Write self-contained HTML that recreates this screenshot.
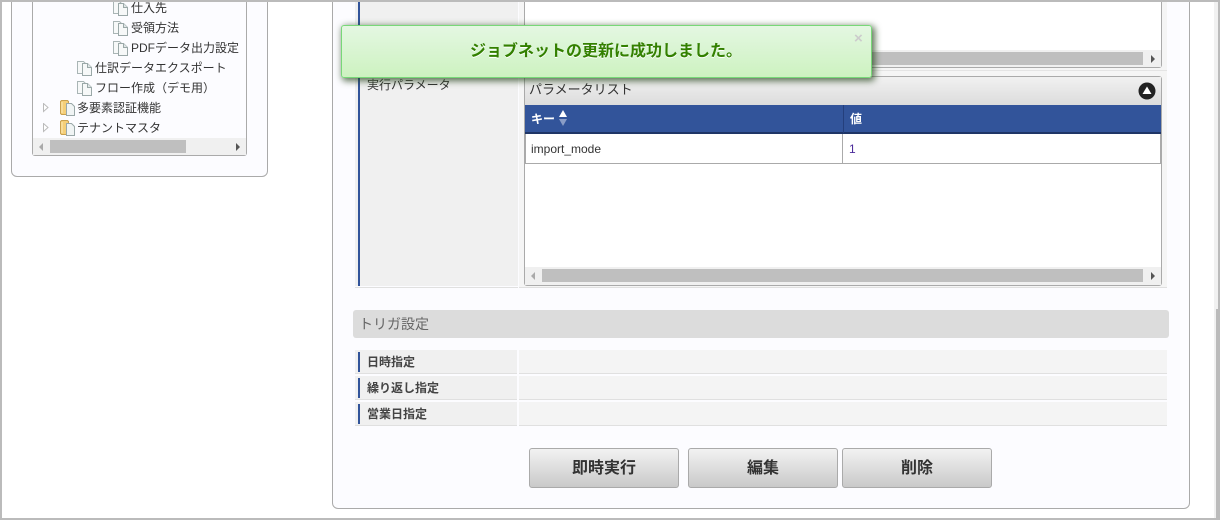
<!DOCTYPE html>
<html lang="ja"><head><meta charset="utf-8"><style>
html,body{margin:0;padding:0;background:#fff}
body{width:1220px;height:520px;position:relative;overflow:hidden;font-family:"Liberation Sans","Noto Sans CJK JP",sans-serif;color:#333;font-size:12px}
.a{position:absolute;box-sizing:border-box}
.t{position:absolute;white-space:nowrap;line-height:16px}
svg{position:absolute;display:block}
.btn{position:absolute;top:448px;width:150px;height:40px;box-sizing:border-box;border:1px solid #aaa;border-radius:3px;background:linear-gradient(#f2f2f2,#c9c9c9);text-align:center;font-weight:bold;font-size:16px;line-height:40px;color:#333}
</style></head><body>
<svg width="0" height="0"><defs>
<symbol id="doc" viewBox="0 0 15 15"><path d="M.5 .5h6l2 2v10h-8z" fill="#f6f8f8" stroke="#a9b5b5"/><path d="M5.500 2.500h5l4 4v8h-9z" fill="#f6f8f8" stroke="#9aa8a8"/><path d="M10.500 2.500v4h4" fill="#dfe6e6" stroke="#9aa8a8"/></symbol>
<symbol id="fold" viewBox="0 0 15 16"><path d="M.5 1.500l1-1h6l1 1v13h-7l-1-1z" fill="#f5cf78" stroke="#c9a14f"/><path d="M2 2v11" stroke="#fbeab9"/><path d="M6.500 3.500h5l3 3v9h-8z" fill="#f0f4f4" stroke="#9aa8a8"/></symbol>
</defs></svg>

<!-- left panel -->
<div class="a" style="left:11px;top:-10px;width:257px;height:187px;border:1px solid #aaa;border-radius:6px;background:#fcfcff"></div>
<div class="a" style="left:32px;top:-10px;width:215px;height:166px;border:1px solid #aaa;border-top:0;border-radius:3px;background:#fcfcff"></div>
<svg style="left:113px;top:1px" width="15" height="15"><use href="#doc"/></svg>
<svg style="left:113px;top:21px" width="15" height="15"><use href="#doc"/></svg>
<svg style="left:113px;top:41px" width="15" height="15"><use href="#doc"/></svg>
<svg style="left:77px;top:61px" width="15" height="15"><use href="#doc"/></svg>
<svg style="left:77px;top:81px" width="15" height="15"><use href="#doc"/></svg>
<svg style="left:60px;top:100px" width="15" height="16"><use href="#fold"/></svg>
<svg style="left:60px;top:120px" width="15" height="16"><use href="#fold"/></svg>
<svg style="left:43px;top:103px" width="6" height="10"><path d="M.5.5l4.500 4-4.500 4z" fill="#fff" stroke="#bbb"/></svg>
<svg style="left:43px;top:123px" width="6" height="10"><path d="M.5.5l4.500 4-4.500 4z" fill="#fff" stroke="#bbb"/></svg>
<div class="t" style="left:131px;top:0">仕入先</div>
<div class="t" style="left:131px;top:20px">受領方法</div>
<div class="t" style="left:131px;top:40px">PDFデータ出力設定</div>
<div class="t" style="left:95px;top:60px">仕訳データエクスポート</div>
<div class="t" style="left:95px;top:80px">フロー作成（デモ用）</div>
<div class="t" style="left:77px;top:100px">多要素認証機能</div>
<div class="t" style="left:77px;top:120px">テナントマスタ</div>
<div class="a" style="left:33px;top:138px;width:213px;height:17px;background:#f0f0f0"></div>
<div class="a" style="left:50px;top:140px;width:136px;height:13px;background:#bfbfbf"></div>
<svg style="left:39px;top:143px" width="5" height="8"><path d="M4 0v8L0 4z" fill="#aaa"/></svg>
<svg style="left:236px;top:143px" width="5" height="8"><path d="M0 0v8l4-4z" fill="#555"/></svg>

<!-- main panel -->
<div class="a" style="left:332px;top:-10px;width:858px;height:519px;border:1px solid #aaa;border-radius:6px;background:#fcfcff"></div>

<!-- row params -->
<div class="a" style="left:355px;top:0;width:163px;height:286px;background:#f0f0f0"></div>
<div class="a" style="left:358px;top:0;width:2px;height:286px;background:#32549a"></div>
<div class="a" style="left:355px;top:287px;width:163px;height:1px;background:#e0e0e0"></div>
<div class="a" style="left:519px;top:0;width:648px;height:288px;background:#f5f5f5;border-bottom:1px solid #e0e0e0"></div>
<div class="t" style="left:367px;top:77px;font-size:12px;color:#333">実行パラメータ</div>

<!-- top box -->
<div class="a" style="left:524px;top:-5px;width:638px;height:73px;background:#fff;border:1px solid #aaa;border-radius:3px"></div>
<div class="a" style="left:525px;top:50px;width:636px;height:17px;background:#f0f0f0"></div>
<div class="a" style="left:542px;top:52px;width:601px;height:13px;background:#bfbfbf"></div>
<svg style="left:1151px;top:55px" width="5" height="8"><path d="M0 0v8l4-4z" fill="#555"/></svg>
<div class="a" style="left:519px;top:70px;width:648px;height:1px;background:#e4e4e4"></div>

<!-- parameter list box -->
<div class="a" style="left:524px;top:76px;width:638px;height:210px;background:#fff;border:1px solid #aaa;border-radius:3px"></div>
<div class="a" style="left:525px;top:77px;width:636px;height:28px;background:linear-gradient(#f1f1f1,#dcdcdc)"></div>
<div class="t" style="left:529px;top:82px;font-size:13px;color:#333">パラメータリスト</div>
<svg style="left:1138px;top:82px" width="18" height="18"><circle cx="9" cy="9" r="8.500" fill="#222"/><path d="M9 4.500l4.500 7.500h-9z" fill="#fff"/></svg>
<div class="a" style="left:525px;top:105px;width:636px;height:29px;background:#32549a;border-bottom:2px solid #1f3566"></div>
<div class="a" style="left:843px;top:105px;width:1px;height:28px;background:#243f7c"></div>
<div class="t" style="left:531px;top:111px;font-weight:bold;color:#fff">キー</div>
<svg style="left:558px;top:110px" width="10" height="16"><path d="M5 0l4 7H1z" fill="#fff"/><path d="M5 16l4-7H1z" fill="#8a9dc6"/></svg>
<div class="t" style="left:850px;top:111px;font-weight:bold;color:#fff">値</div>
<div class="a" style="left:525px;top:134px;width:636px;height:30px;background:#fff;border-bottom:1px solid #aaa;border-right:1px solid #aaa;border-left:1px solid #aaa"></div>
<div class="a" style="left:842px;top:134px;width:1px;height:29px;background:#aaa"></div>
<div class="t" style="left:531px;top:141px;color:#333">import_mode</div>
<div class="t" style="left:849px;top:141px;color:#4b2a9a">1</div>
<div class="a" style="left:525px;top:267px;width:636px;height:18px;background:#f0f0f0"></div>
<div class="a" style="left:542px;top:269px;width:601px;height:13px;background:#bfbfbf"></div>
<svg style="left:531px;top:272px" width="5" height="8"><path d="M4 0v8L0 4z" fill="#aaa"/></svg>
<svg style="left:1151px;top:272px" width="5" height="8"><path d="M0 0v8l4-4z" fill="#555"/></svg>

<!-- trigger -->
<div class="a" style="left:353px;top:310px;width:816px;height:28px;background:#dcdcdc;border-radius:3px"></div>
<div class="t" style="left:359px;top:316px;font-size:14px;color:#666">トリガ設定</div>

<div class="a" style="left:355px;top:350px;width:162px;height:24px;background:#f0f0f0;border-bottom:1px solid #e0e0e0"></div>
<div class="a" style="left:358px;top:352px;width:2px;height:20px;background:#32549a"></div>
<div class="a" style="left:519px;top:350px;width:648px;height:24px;background:#f4f4f4;border-bottom:1px solid #e0e0e0"></div>
<div class="t" style="left:367px;top:354px;font-weight:bold;color:#444">日時指定</div>

<div class="a" style="left:355px;top:376px;width:162px;height:24px;background:#f0f0f0;border-bottom:1px solid #e0e0e0"></div>
<div class="a" style="left:358px;top:378px;width:2px;height:20px;background:#32549a"></div>
<div class="a" style="left:519px;top:376px;width:648px;height:24px;background:#f4f4f4;border-bottom:1px solid #e0e0e0"></div>
<div class="t" style="left:367px;top:380px;font-weight:bold;color:#444">繰り返し指定</div>

<div class="a" style="left:355px;top:402px;width:162px;height:24px;background:#f0f0f0;border-bottom:1px solid #e0e0e0"></div>
<div class="a" style="left:358px;top:404px;width:2px;height:20px;background:#32549a"></div>
<div class="a" style="left:519px;top:402px;width:648px;height:24px;background:#f4f4f4;border-bottom:1px solid #e0e0e0"></div>
<div class="t" style="left:367px;top:406px;font-weight:bold;color:#444">営業日指定</div>

<div class="btn" style="left:529px">即時実行</div>
<div class="btn" style="left:688px">編集</div>
<div class="btn" style="left:842px">削除</div>

<!-- toast -->
<div class="a" style="left:341px;top:25px;width:531px;height:53px;border:1px solid #78d878;border-radius:3px;background:linear-gradient(#e4f7e2,#cdf2c0);box-shadow:2px 2px 7px 1px rgba(40,70,30,.75)"></div>
<div class="t" style="left:470px;top:42px;font-size:16px;line-height:20px;font-weight:bold;color:#338000;text-shadow:0 1px 0 #fff">ジョブネットの更新に成功しました。</div>
<div class="t" style="left:854px;top:31px;font-size:15px;font-weight:bold;color:#ccc">×</div>

<!-- page frame and scrollbar -->
<div class="a" style="left:1214px;top:0;width:4px;height:309px;background:#f1f1f1"></div>
<div class="a" style="left:1214px;top:309px;width:2px;height:211px;background:#f1f1f1"></div>
<div class="a" style="left:1216px;top:309px;width:4px;height:211px;background:#bbb"></div>
<div class="a" style="left:1218px;top:0;width:2px;height:520px;background:#bbb"></div>
<div class="a" style="left:0;top:0;width:1220px;height:2px;background:#bbb"></div>
<div class="a" style="left:0;top:0;width:2px;height:520px;background:#bbb"></div>
<div class="a" style="left:0;top:518px;width:1220px;height:2px;background:#bbb"></div>
</body></html>
